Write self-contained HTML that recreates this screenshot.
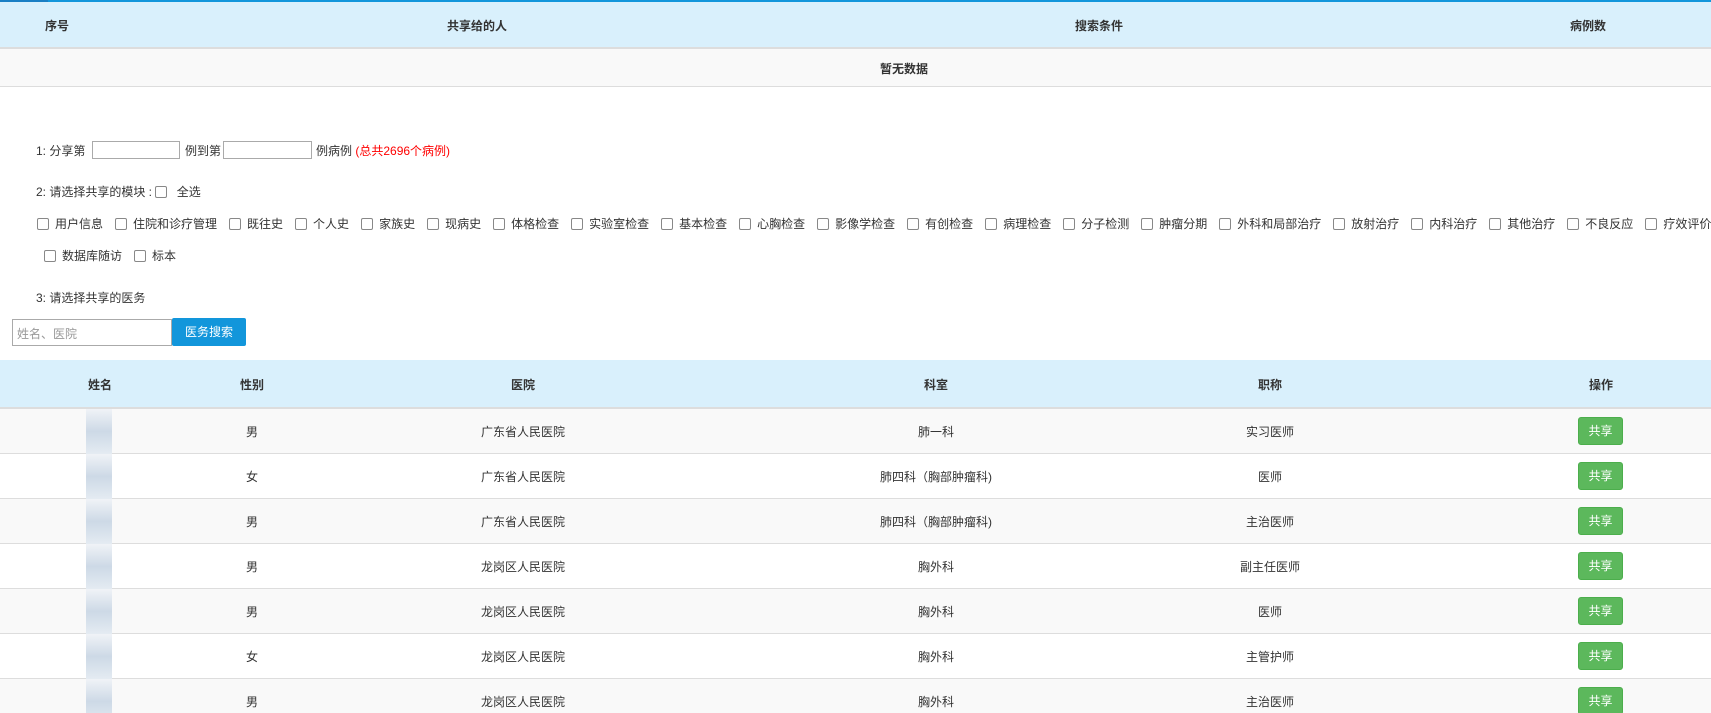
<!DOCTYPE html>
<html><head><meta charset="utf-8"><style>
*{margin:0;padding:0;box-sizing:border-box}
html,body{overflow:hidden}
body{width:1711px;height:713px;overflow:hidden;background:#fff;font-family:"Liberation Sans","Noto Sans CJK SC",sans-serif;font-size:12px;color:#333;position:relative}
.a{position:absolute;white-space:nowrap}
.hd{position:absolute;left:0;width:1711px;background:#d9f0fc;border-bottom:2px solid #ddd}
.th{position:absolute;font-weight:bold;transform:translateX(-50%);white-space:nowrap}
.cb{display:inline-block;width:12px;height:12px;border:1px solid #888;border-radius:2px;vertical-align:-2px;background:#fff;margin-right:6px}
.it{margin-right:12px}
.row{position:absolute;left:0;width:1711px;height:45px;border-bottom:1px solid #ddd}
.c{position:absolute;top:14px;transform:translateX(-50%);white-space:nowrap}
.btn{position:absolute;left:1578px;top:8px;width:45px;height:28px;background:#5cb85c;border:1px solid #4cae4c;border-radius:3px;color:#fff;text-align:center;line-height:26px;font-size:12px}
.blur{position:absolute;left:86px;top:0;width:26px;height:45px;background:linear-gradient(#f0f3f7,#cdd9e6,#e4ebf2)}
input{position:absolute;border:1px solid #aaa;background:#fff}
</style></head><body>
<div class="a" style="left:0;top:0;width:1711px;height:2px;background:#1296db"></div>
<div class="a" style="left:0;top:0;width:48px;height:3px;background:#1a7fc4"></div>
<div class="hd" style="top:2px;height:47px">
<div class="th" style="left:57px;top:15px">序号</div>
<div class="th" style="left:477px;top:15px">共享给的人</div>
<div class="th" style="left:1099px;top:15px">搜索条件</div>
<div class="th" style="left:1588px;top:15px">病例数</div>
</div>
<div class="a" style="left:0;top:49px;width:1711px;height:38px;background:#f9f9f9;border-bottom:1px solid #ddd"><div class="th" style="left:904px;top:11px">暂无数据</div></div>

<div class="a" style="left:36px;top:142px">1: 分享第</div>
<input style="left:92px;top:141px;width:88px;height:18px">
<div class="a" style="left:185px;top:142px">例到第</div>
<input style="left:223px;top:141px;width:89px;height:18px">
<div class="a" style="left:316px;top:142px">例病例 <span style="color:#f00">(总共2696个病例)</span></div>

<div class="a" style="left:36px;top:183px">2: 请选择共享的模块 : <span class="cb"></span> 全选</div>
<div class="a" style="left:37px;top:215px;width:1674px;overflow:hidden">
<span class="cb"></span><span class="it">用户信息</span><span class="cb"></span><span class="it">住院和诊疗管理</span><span class="cb"></span><span class="it">既往史</span><span class="cb"></span><span class="it">个人史</span><span class="cb"></span><span class="it">家族史</span><span class="cb"></span><span class="it">现病史</span><span class="cb"></span><span class="it">体格检查</span><span class="cb"></span><span class="it">实验室检查</span><span class="cb"></span><span class="it">基本检查</span><span class="cb"></span><span class="it">心胸检查</span><span class="cb"></span><span class="it">影像学检查</span><span class="cb"></span><span class="it">有创检查</span><span class="cb"></span><span class="it">病理检查</span><span class="cb"></span><span class="it">分子检测</span><span class="cb"></span><span class="it">肿瘤分期</span><span class="cb"></span><span class="it">外科和局部治疗</span><span class="cb"></span><span class="it">放射治疗</span><span class="cb"></span><span class="it">内科治疗</span><span class="cb"></span><span class="it">其他治疗</span><span class="cb"></span><span class="it">不良反应</span><span class="cb"></span><span class="it">疗效评价</span></div>
<div class="a" style="left:44px;top:247px"><span class="cb"></span><span class="it">数据库随访</span><span class="cb"></span><span class="it">标本</span></div>
<div class="a" style="left:36px;top:289px">3: 请选择共享的医务</div>

<input style="left:12px;top:319px;width:160px;height:27px">
<div class="a" style="left:17px;top:325px;color:#999">姓名、医院</div>
<div class="a" style="left:172px;top:318px;width:74px;height:28px;background:#1296db;color:#fff;text-align:center;line-height:28px;border-radius:2px">医务搜索</div>

<div class="hd" style="top:360px;height:49px">
<div class="th" style="left:100px;top:16px">姓名</div>
<div class="th" style="left:252px;top:16px">性别</div>
<div class="th" style="left:523px;top:16px">医院</div>
<div class="th" style="left:936px;top:16px">科室</div>
<div class="th" style="left:1270px;top:16px">职称</div>
<div class="th" style="left:1601px;top:16px">操作</div>
</div>

<div class="row" style="top:409px;background:#f9f9f9"><div class="blur"></div><div class="c" style="left:252px">男</div><div class="c" style="left:523px">广东省人民医院</div><div class="c" style="left:936px">肺一科</div><div class="c" style="left:1270px">实习医师</div><div class="btn">共享</div></div>
<div class="row" style="top:454px;background:#fff"><div class="blur"></div><div class="c" style="left:252px">女</div><div class="c" style="left:523px">广东省人民医院</div><div class="c" style="left:936px">肺四科（胸部肿瘤科)</div><div class="c" style="left:1270px">医师</div><div class="btn">共享</div></div>
<div class="row" style="top:499px;background:#f9f9f9"><div class="blur"></div><div class="c" style="left:252px">男</div><div class="c" style="left:523px">广东省人民医院</div><div class="c" style="left:936px">肺四科（胸部肿瘤科)</div><div class="c" style="left:1270px">主治医师</div><div class="btn">共享</div></div>
<div class="row" style="top:544px;background:#fff"><div class="blur"></div><div class="c" style="left:252px">男</div><div class="c" style="left:523px">龙岗区人民医院</div><div class="c" style="left:936px">胸外科</div><div class="c" style="left:1270px">副主任医师</div><div class="btn">共享</div></div>
<div class="row" style="top:589px;background:#f9f9f9"><div class="blur"></div><div class="c" style="left:252px">男</div><div class="c" style="left:523px">龙岗区人民医院</div><div class="c" style="left:936px">胸外科</div><div class="c" style="left:1270px">医师</div><div class="btn">共享</div></div>
<div class="row" style="top:634px;background:#fff"><div class="blur"></div><div class="c" style="left:252px">女</div><div class="c" style="left:523px">龙岗区人民医院</div><div class="c" style="left:936px">胸外科</div><div class="c" style="left:1270px">主管护师</div><div class="btn">共享</div></div>
<div class="row" style="top:679px;background:#f9f9f9"><div class="blur"></div><div class="c" style="left:252px">男</div><div class="c" style="left:523px">龙岗区人民医院</div><div class="c" style="left:936px">胸外科</div><div class="c" style="left:1270px">主治医师</div><div class="btn">共享</div></div>
</body></html>
